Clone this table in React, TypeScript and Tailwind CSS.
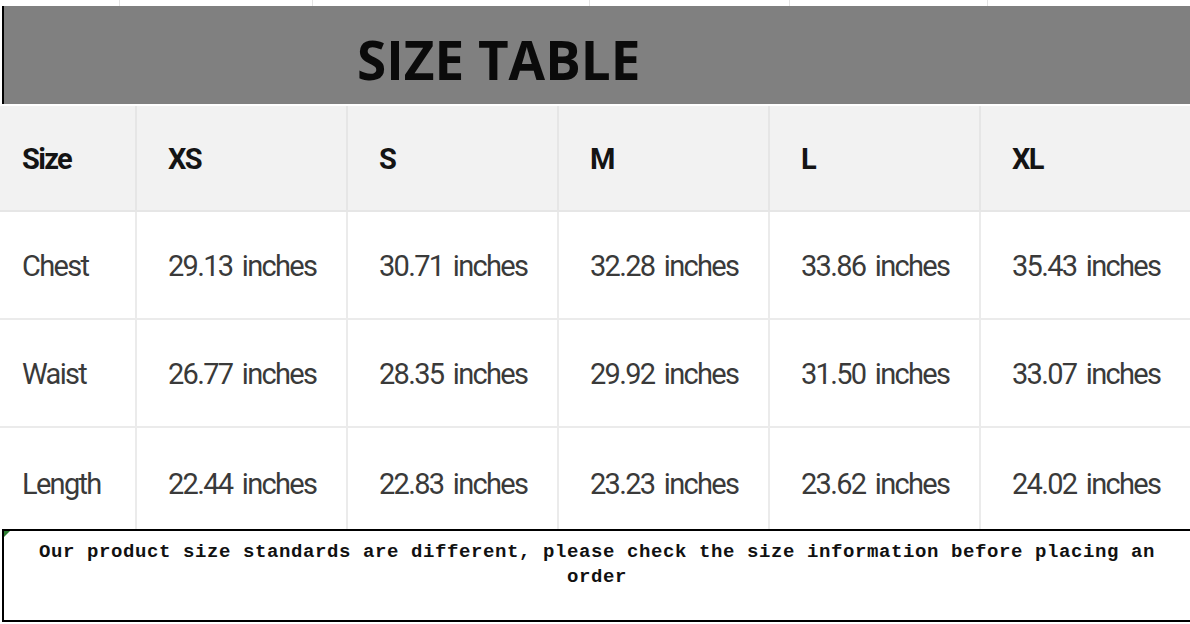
import React from 'react';

const sizes = ['XS', 'S', 'M', 'L', 'XL'];

const rows = [
  { label: 'Chest', values: ['29.13', '30.71', '32.28', '33.86', '35.43'] },
  { label: 'Waist', values: ['26.77', '28.35', '29.92', '31.50', '33.07'] },
  { label: 'Length', values: ['22.44', '22.83', '23.23', '23.62', '24.02'] },
];

const cellFont = { fontFamily: 'Roboto, "Liberation Sans", sans-serif' };

const App: React.FC = () => {
  return (
    <div className="w-[1190px] h-[624px] bg-white overflow-hidden">
      {/* sheet grid peeking above the banner */}
      <div className="flex h-[6px]">
        <div className="w-[120px] border-r border-[#e4e4e4]" />
        <div className="w-[193px] border-r border-[#e4e4e4]" />
        <div className="w-[277px] border-r border-[#e4e4e4]" />
        <div className="w-[200px] border-r border-[#e4e4e4]" />
        <div className="w-[198px] border-r border-[#e4e4e4]" />
        <div className="flex-1" />
      </div>

      <div className="ml-[2px] h-[98px] bg-[#808080] border-l-2 border-black pl-[353px] pt-[23px]">
        <h1
          className="text-[53px] leading-[62px] font-bold text-[#0a0a0a]"
          style={{ fontFamily: '"Open Sans", "Noto Sans", sans-serif' }}
        >
          SIZE TABLE
        </h1>
      </div>

      <div className="h-[2px]" />

      <div
        className="grid grid-cols-[137px_repeat(5,211px)] whitespace-nowrap tracking-[-1.7px] [word-spacing:4px]"
        style={cellFont}
      >
        <div className="h-[106px] pt-[4px] bg-[#f2f2f2] border-r-2 border-b-2 border-[#e6e6e6] flex items-center pl-[22px] text-[29px] font-bold text-[#141414]">
          Size
        </div>
        {sizes.map((s, i) => (
          <div
            key={s}
            className={`h-[106px] pt-[4px] bg-[#f2f2f2] border-b-2 border-[#e6e6e6] flex items-center pl-[31px] text-[29px] font-bold text-[#141414] ${i < 4 ? 'border-r-2' : ''}`}
          >
            {s}
          </div>
        ))}

        {rows.map((row, r) => {
          const last = r === rows.length - 1;
          const h = last ? 'h-[101px] pt-[12px]' : 'h-[108px] pt-[4px] border-b-2';
          return (
            <React.Fragment key={row.label}>
              <div className={`${h} border-r-2 border-[#ebebeb] flex items-center pl-[22px] text-[29px] text-[#3a3a3a]`}>
                {row.label}
              </div>
              {row.values.map((v, i) => (
                <div
                  key={i}
                  className={`${h} border-[#ebebeb] flex items-center pl-[31px] text-[29px] text-[#3a3a3a] ${i < 4 ? 'border-r-2' : ''}`}
                >
                  {v} inches
                </div>
              ))}
            </React.Fragment>
          );
        })}
      </div>

      <div className="relative ml-[2px] h-[93px] border-l-2 border-t-2 border-b-2 border-black px-[30px] pt-[9px]">
        <div className="absolute left-0 top-0 w-0 h-0 border-t-[6px] border-r-[6px] border-t-[#2e7d32] border-r-transparent" />
        <p
          className="text-center text-[19px] leading-[25px] font-bold tracking-[0.6px] text-[#111]"
          style={{ fontFamily: '"Liberation Mono", "DejaVu Sans Mono", monospace' }}
        >
          Our product size standards are different, please check the size information before placing an order
        </p>
      </div>
    </div>
  );
};

export default App;
